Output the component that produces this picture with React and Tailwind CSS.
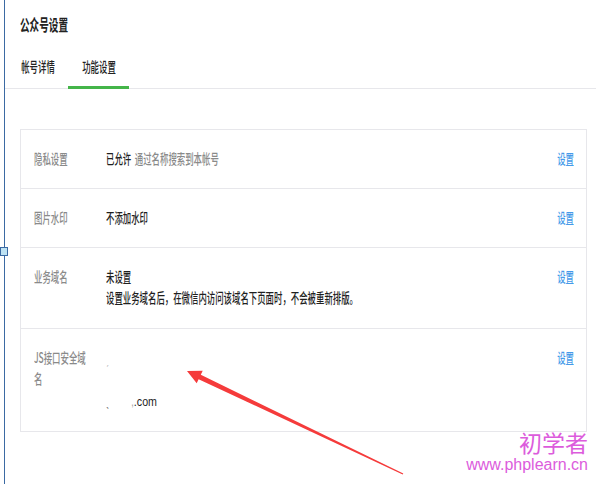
import React from "react";

const CJK = "font-['Noto_Sans_CJK_SC','Liberation_Sans',sans-serif]";

function S({ children, className = "" }) {
  return (
    <span className={"inline-block origin-left scale-x-[0.6] whitespace-nowrap " + className}>
      {children}
    </span>
  );
}

function Row({ label, children, first, extra = "" }) {
  return (
    <div className={"flex pl-[13px] pr-[12px] pt-[18px] " + (first ? "" : "border-t border-[#e7e7eb] ") + extra}>
      <div className="w-[72px] shrink-0 text-[14px] leading-[21px] font-medium text-[#8a8a8a]">{label}</div>
      <div className="flex-1 text-[14px] leading-[21px] font-medium text-[#1f1f1f]">{children}</div>
      <div className="text-[14px] leading-[21px] font-medium text-[#459ae9]">
        <span className="inline-block origin-right scale-x-[0.6] whitespace-nowrap">设置</span>
      </div>
    </div>
  );
}

export default function App() {
  return (
    <div className={"relative w-[596px] h-[484px] bg-white overflow-hidden flex " + CJK}>
      <div className="w-[4px] shrink-0" />
      <div className="flex-1 flex flex-col border-l border-[#3b6aa3]">
        <div className="h-[48px] pl-[15px] pt-[14px] text-[16px] leading-[20px] font-bold text-[#222]">
          <S>公众号设置</S>
        </div>
        <div className="flex h-[41px] border-b border-[#e7e7eb] pl-[2px]">
          <div className="relative w-[61px] pt-[8px] text-center text-[14px] leading-[20px] font-medium text-[#222]">
            <span className="inline-block scale-x-[0.6] whitespace-nowrap">帐号详情</span>
          </div>
          <div className="relative w-[61px] pt-[8px] text-center text-[14px] leading-[20px] font-medium text-[#222]">
            <span className="inline-block scale-x-[0.6] whitespace-nowrap">功能设置</span>
            <div className="absolute left-0 right-0 bottom-[-1px] h-[3px] bg-[#44b549]" />
          </div>
        </div>

        <div className="mt-[40px] ml-[15px] mr-[9px] border border-[#e7e7eb]">
          <Row label={<S>隐私设置</S>} first extra="pb-[19px]">
            <S>
              已允许<span className="ml-[6px] text-[#8a8a8a]">通过名称搜索到本帐号</span>
            </S>
          </Row>
          <Row label={<S>图片水印</S>} extra="pb-[19px]">
            <S>不添加水印</S>
          </Row>
          <Row label={<S>业务域名</S>} extra="pb-[20px]">
            <div className="leading-[21px]">
              <S>未设置</S>
            </div>
            <div className="leading-[21px]">
              <S>设置业务域名后，在微信内访问该域名下页面时，不会被重新排版。</S>
            </div>
          </Row>
          <Row
            label={
              <S>
                JS接口安全域
                <br />名
              </S>
            }
            extra="pb-[18px]"
          >
            <div className="h-[22px] leading-[22px] text-[#bbb]">
              <S>ˏ</S>
            </div>
            <div className="h-[22px]" />
            <div className="h-[22px] leading-[22px] font-['Liberation_Sans',sans-serif] font-normal text-[13px]">
              <span className="inline-block origin-left scale-x-[0.82] whitespace-nowrap">
                <span className="text-[#777]">ˎ</span>
                <span className="ml-[26px] text-[#aaa]">,</span>
                <span>.com</span>
              </span>
            </div>
          </Row>
        </div>
      </div>

      {/* selection handle on the left edge */}
      <div className="absolute left-0 top-[247px] w-[8px] h-[9px] border border-[#3b6aa3] bg-[#bfe3f3]" />

      {/* red annotation arrow */}
      <svg className="absolute left-0 top-0" width="596" height="484" viewBox="0 0 596 484">
        <polygon
          points="187,371 202.7,370.7 200.8,374.7 403.3,473.6 402.7,474.4 198.6,379.3 196.7,383.3"
          fill="#f53b3b"
        />
      </svg>

      {/* watermark */}
      <div className="absolute right-[8px] top-[427px] flex flex-col items-end text-[#dc5cdc]">
        <div className="text-[23px] leading-[30px] font-['Noto_Sans_CJK_SC',sans-serif]">初学者</div>
        <div className="text-[16px] leading-[20px] -mt-[2px] font-['Liberation_Sans',sans-serif]">www.phplearn.cn</div>
      </div>
    </div>
  );
}
